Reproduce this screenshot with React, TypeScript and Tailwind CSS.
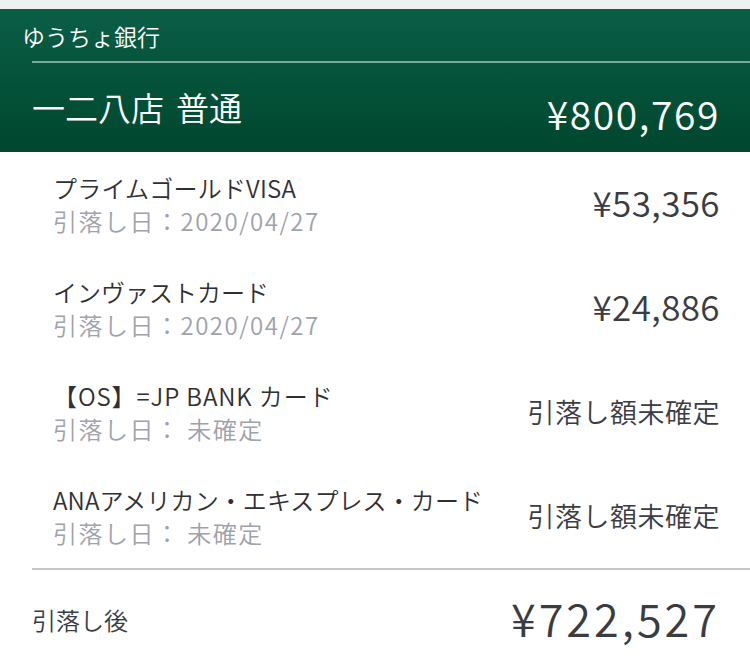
import React from "react";

const rows = [
  { name: "プライムゴールドVISA", date: "引落し日：2020/04/27", amount: "¥53,356", pending: false, nameCls: "tracking-[0.2px]" },
  { name: "インヴァストカード", date: "引落し日：2020/04/27", amount: "¥24,886", pending: false, nameCls: "tracking-normal" },
  { name: "【OS】=JP BANK カード", date: "引落し日： 未確定", amount: "引落し額未確定", pending: true, nameCls: "tracking-[0.9px]" },
  { name: "ANAアメリカン・エキスプレス・カード", date: "引落し日： 未確定", amount: "引落し額未確定", pending: true, nameCls: "tracking-[0.1px]" },
];

export default function App() {
  return (
    <div
      className="w-[750px] h-[660px] bg-white overflow-hidden font-[350]"
      style={{ fontFamily: '"Noto Sans CJK JP", "Noto Sans", sans-serif' }}
    >
      <div className="h-[9px] bg-[#eff0f2]" />
      <div className="h-[143px] bg-gradient-to-b from-[#0b5e46] to-[#00472e] flex flex-col">
        <div className="pl-[22px] pt-[16px] text-[23px] leading-none text-white">ゆうちょ銀行</div>
        <div className="ml-[32px] mt-[13px] h-[2px] bg-[#7fa797]" />
        <div className="flex justify-between items-start pl-[32px] pr-[30px]">
          <div className="mt-[28px] text-[33px] leading-none text-white flex">
            <span>一二八店</span>
            <span className="ml-[12px]">普通</span>
          </div>
          <div className="mt-[31px] text-[39px] leading-none text-white tracking-[1.6px]">¥800,769</div>
        </div>
      </div>
      <div className="flex flex-col">
        {rows.map((r) => (
          <div key={r.name} className="h-[104px] flex justify-between items-start pl-[53px] pr-[30px]">
            <div className="flex flex-col mt-[23px]">
              <div className={`text-[24px] leading-[26px] text-[#2f3034] ${r.nameCls}`}>{r.name}</div>
              <div className="mt-[7px] text-[24px] leading-[26px] text-[#9ea2ab] tracking-[1.5px]">{r.date}</div>
            </div>
            {r.pending ? (
              <div className="mt-[38px] text-[27px] leading-none text-[#3a3c42] tracking-[0.5px]">{r.amount}</div>
            ) : (
              <div className="mt-[32px] text-[35px] leading-none text-[#3a3c42] tracking-[0.4px]">{r.amount}</div>
            )}
          </div>
        ))}
      </div>
      <div className="ml-[32px] h-[2px] bg-[#c8c8c8]" />
      <div className="flex justify-between items-start pl-[32px] pr-[30px]">
        <div className="mt-[38px] text-[24px] leading-none text-[#3a3c42]">引落し後</div>
        <div className="mt-[25px] text-[45px] leading-none text-[#3a3c42] tracking-[3px]">¥722,527</div>
      </div>
    </div>
  );
}
